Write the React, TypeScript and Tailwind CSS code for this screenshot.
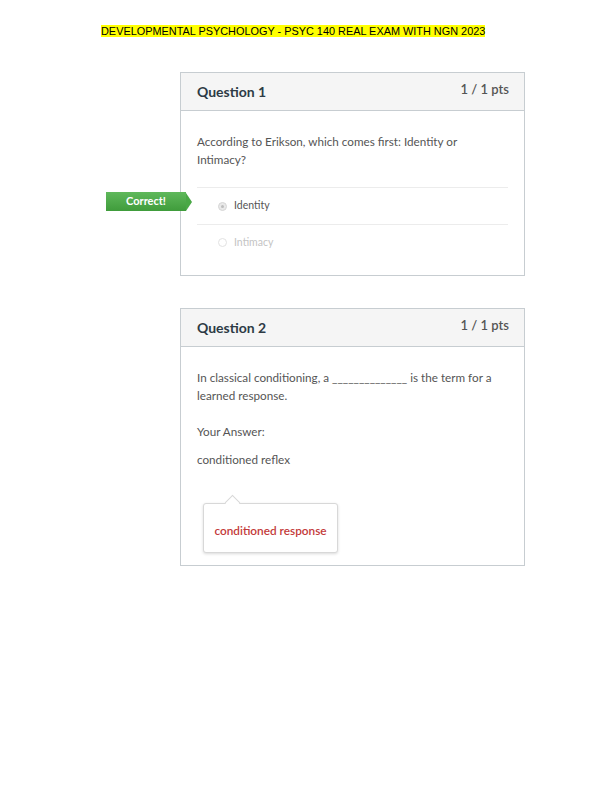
import React from "react";

const lato = { fontFamily: "Lato, 'Open Sans', sans-serif" };

function Header({ title }: { title: string }) {
  return (
    <div className="flex h-[38px] items-center justify-between border-b border-[#c7cdd1] bg-[#f5f5f5] pl-4 pr-[15px]">
      <span className="text-[14px] font-bold text-[#2d3b45]">{title}</span>
      <span className="-mt-1 text-[13px] font-semibold text-[#555]">1 / 1 pts</span>
    </div>
  );
}

function Radio({ faded }: { faded?: boolean }) {
  return (
    <span
      className={
        faded
          ? "inline-block h-[9px] w-[9px] rounded-full border border-[#e2e2e2] bg-white"
          : "inline-flex h-[9px] w-[9px] items-center justify-center rounded-full border border-[#d6d6d6] bg-[#e9e9e9]"
      }
    >
      {!faded && <span className="h-[3px] w-[3px] rounded-full bg-[#bdbdbd]" />}
    </span>
  );
}

export default function App() {
  return (
    <div className="min-h-[800px] w-[606px] bg-white" style={lato}>
      <div
        className="pl-[101px] pt-[25px] text-[10.9px] leading-[13px]"
        style={{ fontFamily: "'Liberation Sans', Arial, sans-serif" }}
      >
        <span className="bg-[#ffff00] text-black">
          DEVELOPMENTAL PSYCHOLOGY - PSYC 140 REAL EXAM WITH NGN 2023
        </span>
      </div>

      {/* Question 1 */}
      <div className="ml-[180px] mt-[34px] w-[345px] border border-[#c7cdd1]">
        <Header title="Question 1" />
        <div className="pb-[15px] pt-[21px]">
          <p className="px-4 pr-[28px] text-[11.7px] leading-[18px] text-[#555]">
            According to Erikson, which comes first: Identity or Intimacy?
          </p>
          <div className="mx-4 mt-[19px] border-t border-[#ececec]">
            <div className="relative flex h-[36px] items-center gap-[7px] pl-[21px]">
              <div className="absolute left-[-91px] top-[4px] flex h-[19px] items-center">
                <div className="flex h-[19px] w-[80px] items-center justify-center bg-gradient-to-b from-[#5fb85b] to-[#3f9c3b] text-[11px] font-bold text-white">
                  Correct!
                </div>
                <div className="h-0 w-0 border-y-[9.5px] border-l-[6px] border-y-transparent border-l-[#4aa846]" />
              </div>
              <Radio />
              <span className="text-[10.5px] text-[#555]">Identity</span>
            </div>
            <div className="flex h-[36px] items-center gap-[7px] border-t border-[#ececec] pl-[21px]">
              <Radio faded />
              <span className="text-[10.5px] text-[#c4c4c4]">Intimacy</span>
            </div>
          </div>
        </div>
      </div>

      {/* Question 2 */}
      <div className="ml-[180px] mt-[32px] w-[345px] border border-[#c7cdd1]">
        <Header title="Question 2" />
        <div className="px-4 pb-[12px] pr-[28px] pt-[21px]">
          <p className="text-[11.7px] leading-[18px] text-[#555]">
            In classical conditioning, a ______________ is the term for a learned response.
          </p>
          <p className="mt-[18px] text-[11.7px] leading-[18px] text-[#555]">Your Answer:</p>
          <p className="mt-[10px] text-[11.7px] leading-[18px] text-[#555]">conditioned reflex</p>
          <div className="relative ml-[6px] mt-[35px] w-[135px]">
            <div className="absolute left-[24px] top-[-6px] h-[11px] w-[11px] rotate-45 border-l border-t border-[#d8d8d8] bg-white" />
            <div className="flex h-[50px] items-end justify-center rounded-[3px] border border-[#d8d8d8] bg-white pb-[12px] shadow-[0_1px_3px_rgba(0,0,0,0.15)]">
              <span className="text-[11.8px] font-semibold text-[#c33a3a]">conditioned response</span>
            </div>
          </div>
        </div>
      </div>
    </div>
  );
}
